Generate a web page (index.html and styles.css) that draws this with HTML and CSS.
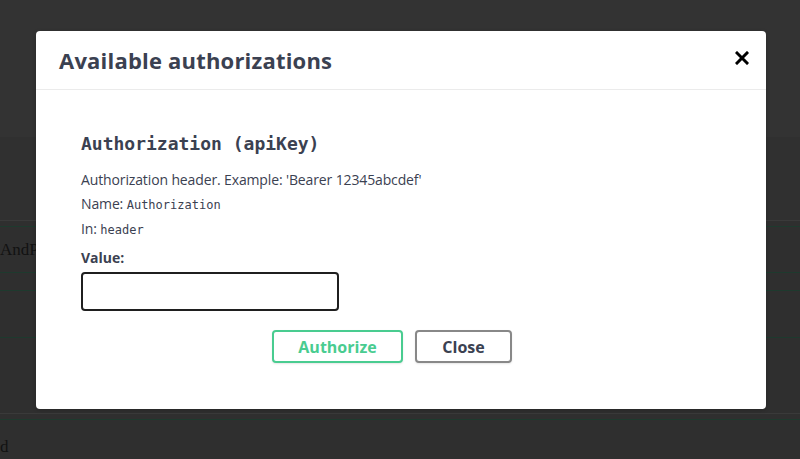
FILE: index.html
```html
<!DOCTYPE html>
<html>
<head>
<meta charset="utf-8">
<link rel="stylesheet" href="styles.css">
</head>
<body>
<div class="page">
  <div class="band band-top"></div>
  <div class="band band-mid"></div>
  <div class="rule rule-gray"></div>
  <div class="gap6"></div>
  <div class="rule rule-green"></div>
  <div class="op op-a"><span class="op-text">AndP</span></div>
  <div class="rule rule-green"></div>
  <div class="op op-b"></div>
  <div class="rule rule-green"></div>
  <div class="op op-c"></div>
  <div class="rule rule-green"></div>
  <div class="op op-d"></div>
  <div class="rule rule-gray"></div>
  <div class="gap6"></div>
  <div class="rule rule-green"></div>
  <div class="op op-e"><span class="op-text">d</span></div>
</div>

<div class="modal">
  <div class="modal-header">
    <h3 class="modal-title">Available authorizations</h3>
    <button class="close-x" aria-label="Close">
      <svg width="14" height="14" viewBox="0 0 14 14"><path d="M2 2 L12 12 M12 2 L2 12" stroke="#000" stroke-width="3" stroke-linecap="square"/></svg>
    </button>
  </div>
  <div class="modal-body">
    <h4 class="auth-title">Authorization (apiKey)</h4>
    <p class="line">Authorization header. Example: 'Bearer 12345abcdef'</p>
    <p class="line">Name: <code>Authorization</code></p>
    <p class="line">In: <code>header</code></p>
    <label class="value-label">Value:</label>
    <input class="value-input" type="text">
    <div class="btn-row">
      <button class="btn btn-auth">Authorize</button>
      <button class="btn btn-close">Close</button>
    </div>
  </div>
</div>
</body>
</html>
```

FILE: styles.css
```css
html, body {
  margin: 0;
  padding: 0;
  background: #2f2f2f;
}
body {
  width: 800px;
  height: 459px;
  overflow: hidden;
  position: relative;
}
.page {
  display: flex;
  flex-direction: column;
}
.band-top { height: 137px; background: #333333; }
.band-mid { height: 83px; background: #303030; }
.rule { height: 1px; }
.rule-gray { background: #3a3a3a; }
.rule-green { background: #1e3a2e; }
.gap6 { height: 5px; background: #2f2f2f; }
.op {
  background: #2f2f2f;
  display: flex;
  align-items: center;
  overflow: hidden;
}
.op-a { height: 45px; }
.op-b { height: 17px; }
.op-c { height: 46px; }
.op-d { height: 75px; }
.op-e { height: 40px; padding-top: 7px; }
.op-text {
  font-family: "Liberation Serif", serif;
  font-size: 17px;
  font-weight: 400;
  color: #121212;
  white-space: nowrap;
}

.modal {
  position: absolute;
  left: 36px;
  top: 31px;
  width: 730px;
  height: 378px;
  background: #fff;
  border-radius: 4px;
  box-shadow: 0 1px 4px rgba(0,0,0,0.2);
  font-family: "Open Sans", sans-serif;
  color: #3b4151;
}
.modal-header {
  height: 58px;
  border-bottom: 1px solid #ebebeb;
  display: flex;
  align-items: center;
  justify-content: space-between;
  padding: 0 17px 0 23px;
}
.modal-title {
  margin: 0;
  font-size: 22px;
  font-weight: 700;
  letter-spacing: 0.2px;
  color: #3b4151;
}
.close-x {
  border: none;
  background: none;
  padding: 0;
  width: 14px;
  height: 14px;
  display: flex;
  margin-top: -4px;
}
.modal-body {
  padding: 42px 20px 0 45px;
}
.auth-title {
  margin: 0 0 12px;
  font-family: "DejaVu Sans Mono", monospace;
  font-size: 18px;
  font-weight: 700;
  line-height: 24px;
}
.line {
  margin: 0;
  font-size: 14px;
  letter-spacing: -0.13px;
  line-height: 24px;
}
code {
  font-family: "DejaVu Sans Mono", monospace;
  font-size: 12px;
  letter-spacing: 0;
}
.value-label {
  display: block;
  margin-top: 4px;
  font-size: 14px;
  font-weight: 700;
  line-height: 24px;
}
.value-input {
  display: block;
  box-sizing: border-box;
  margin-top: 2px;
  width: 258px;
  height: 39px;
  border: 2px solid #1f1f1f;
  border-radius: 4px;
  background: #fff;
  outline: none;
}
.btn-row {
  display: flex;
  justify-content: center;
  gap: 12px;
  margin-top: 19px;
  padding-right: 43px;
}
.btn {
  box-sizing: border-box;
  height: 33px;
  border-radius: 4px;
  background: #fff;
  font-family: "Open Sans", sans-serif;
  font-size: 16px;
  font-weight: 700;
  box-shadow: 0 1px 2px rgba(0,0,0,0.1);
  padding: 0;
}
.btn-auth {
  width: 131px;
  border: 2px solid #49cc90;
  color: #49cc90;
}
.btn-close {
  width: 97px;
  border: 2px solid #888888;
  color: #3b4151;
}
```
